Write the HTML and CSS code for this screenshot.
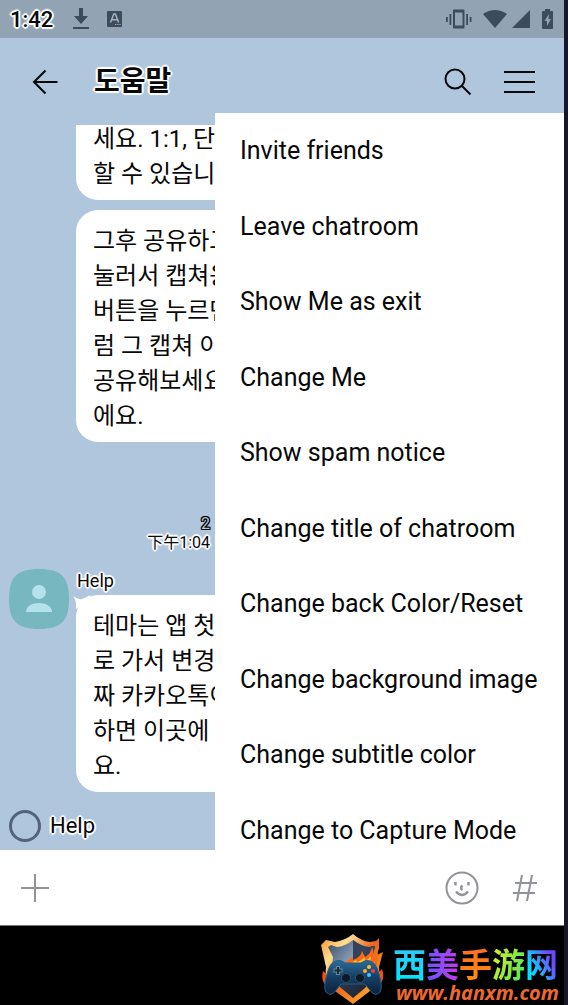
FILE: index.html
```html
<!DOCTYPE html>
<html lang="en">
<head>
<meta charset="utf-8">
<meta name="viewport" content="width=device-width, initial-scale=1">
<title>도움말</title>
<link rel="stylesheet" href="styles.css">
</head>
<body>
<div class="phone">
  <header class="status">
    <time class="clock outlined">1:42</time>
    <svg class="status-download" width="18" height="22" viewBox="0 0 18 22"><path d="M7 0h4v8h5l-7 8-7-8h5zM1 19h16v2H1z"/></svg>
    <svg width="16" height="18" viewBox="0 0 16 18"><rect y="1" width="15" height="16" rx="1"/><path d="M3.500 12.500 6.800 4h1.600l3.300 8.500M5 9.800h5" fill="none" stroke="#a5b3bf" stroke-width="1.500"/><path d="M8 14.500h6" stroke="#a5b3bf" stroke-dasharray="1.200 1"/></svg>
    <div class="status-right">
      <svg width="26" height="20" viewBox="0 0 26 20"><path fill-rule="evenodd" d="M7 1.500Q7 .5 8 .5h9.500q1 0 1 1v17q0 1-1 1H8q-1 0-1-1zm2 2v13h7.500v-13zM3.500 5h1.800v11H3.500zM0 8h1.800v5H0zM20.200 5H22v11h-1.800zM23.700 8h1.800v5h-1.800z"/></svg>
      <svg class="wifi" width="24" height="18" viewBox="0 0 24 18"><path d="M0 4Q12-4 24 4L12 18z"/></svg>
      <svg class="signal" width="18" height="18" viewBox="0 0 18 18"><path d="M18 0v18H0z"/></svg>
      <svg width="11" height="20" viewBox="0 0 11 20"><path fill-rule="evenodd" d="M3 0h5v2h2q1 0 1 1v16q0 1-1 1H1q-1 0-1-1V3q0-1 1-1h2zm4 5-4.500 7H5v5l4-7H6.500z"/></svg>
    </div>
  </header>

  <nav class="appbar">
    <button class="icon-btn" aria-label="Back"><svg width="26" height="26" viewBox="0 0 26 26"><path d="M13.500 1.500 2 13l11.500 11.500M2 13h23.500"/></svg></button>
    <h1 class="title outlined">도움말</h1>
    <button class="icon-btn search" aria-label="Search"><svg width="28" height="28" viewBox="0 0 28 28"><circle cx="11" cy="11" r="9.500"/><path d="m18 18 8.500 8.500"/></svg></button>
    <button class="icon-btn" aria-label="Menu"><svg width="32" height="26" viewBox="0 0 32 26"><path d="M0 3h31M0 13h31M0 23h31"/></svg></button>
  </nav>

  <main class="chat">
    <p class="bubble first">세요. 1:1, 단<br>할 수 있습니</p>
    <p class="bubble">그후 공유하고<br>눌러서 캡쳐용<br>버튼을 누르면<br>럼 그 캡쳐 이<br>공유해보세요<br>에요.</p>
    <div class="meta">
      <span class="unread">2</span>
      <time class="outlined">下午1:04</time>
    </div>
    <section class="message">
      <svg class="avatar" width="60" height="60" viewBox="0 0 60 60"><path fill="#77b7c0" d="M30 0C52 0 60 8 60 30S52 60 30 60 0 52 0 30 8 0 30 0z"/><circle cx="30" cy="23" r="7" fill="#b5e2ea"/><path d="M17 43c0-12 26-12 26 0z" fill="#b5e2ea"/></svg>
      <div class="message-body">
        <h2 class="sender outlined">Help</h2>
        <div class="tailed">
          <svg class="tail" width="18" height="14" viewBox="0 0 18 14"><path d="M0 1q5 4 9 3L18 0 10 10 3 14Q4 6 0 1z" fill="#fff"/></svg>
          <p class="bubble">테마는 앱 첫<br>로 가서 변경<br>짜 카카오톡이<br>하면 이곳에<br>요.</p>
        </div>
      </div>
    </section>
    <label class="speaker"><input type="radio" name="speaker"><span class="outlined">Help</span></label>
  </main>

  <ul class="menu">
    <li><button>Invite friends</button></li>
    <li><button>Leave chatroom</button></li>
    <li><button>Show Me as exit</button></li>
    <li><button>Change Me</button></li>
    <li><button>Show spam notice</button></li>
    <li><button>Change title of chatroom</button></li>
    <li><button>Change back Color/Reset</button></li>
    <li><button>Change background image</button></li>
    <li><button>Change subtitle color</button></li>
    <li><button>Change to Capture Mode</button></li>
  </ul>

  <form class="composer">
    <button type="button" class="icon-btn" aria-label="Add"><svg width="28" height="28" viewBox="0 0 28 28"><path d="M14 0v28M0 14h28"/></svg></button>
    <input class="entry" type="text" aria-label="Message">
    <button type="button" class="icon-btn" aria-label="Emoji"><svg width="34" height="34" viewBox="0 0 34 34"><circle cx="17" cy="17" r="15.500"/><path d="M10.500 11v3.500M23.500 11v3.500M17.500 14.500q-3 2.500 0 4.500M11 20.500q6 7 12 0" stroke-width="2.400"/></svg></button>
    <button type="button" class="icon-btn hash" aria-label="Hashtag"><svg width="24" height="28" viewBox="0 0 24 28"><path d="M9 1 4 27M19 1l-5 26M2 9h22M0 19h22"/></svg></button>
  </form>

  <footer class="brand">
    <svg class="crest" width="64" height="72" viewBox="0 0 64 72">
      <defs>
        <linearGradient id="rim" x2="1" y2="1"><stop stop-color="#ff8a2a"/><stop offset=".25" stop-color="#ffdf90"/><stop offset=".5" stop-color="#e8651b"/><stop offset=".8" stop-color="#ff9b28"/><stop offset="1" stop-color="#8d2b0b"/></linearGradient>
        <linearGradient id="steel" x2="1" y2="1"><stop stop-color="#3c4c60"/><stop offset=".45" stop-color="#8fa7c2"/><stop offset=".5" stop-color="#2a3648"/><stop offset="1" stop-color="#172030"/></linearGradient>
        <linearGradient id="pad" x2="0" y2="1"><stop stop-color="#2c6b98"/><stop offset=".5" stop-color="#153f64"/><stop offset="1" stop-color="#0b2039"/></linearGradient>
      </defs>
      <path d="M2 38q-3 12 6 16l4 5-3-15zM61 36q4 12-5 18l-5 5 4-17z" fill="#f0501a"/>
      <path d="M32 1q8 7 17 8l6-1 3-3v10l-2 7 6-3-4 15q2 15-9 24L32 71 14 58Q3 49 5 34L0 12l5-5 9 2q11-2 18-8z" fill="url(#rim)"/>
      <path d="M32 7q8 6 16 7l6-1q-1 6-3 11 3 21-7 31L32 65 19 54Q9 44 12 24L7 14l3-2 6 2q9-1 16-7z" fill="url(#steel)"/>
      <path d="M32 7q8 6 16 7l6-1q-1 6-3 11v7H32z" fill="#344158"/>
      <path d="M23 29q5-1 8-6l1 4q8-3 9-9l3 6q6-3 7-10 3 6 0 10l6-4q1 10-4 18z" fill="#f9691c"/>
      <path d="m30 30 5-3 1 2q6-2 7-5l2 4 5-5-1 8 5-2-4 7z" fill="#ffbc31"/>
      <path d="M15 28q5-2 9 2h16q5-4 9-2 6 1 9 13 4 13 1 18-5 6-11-3l-4-5H20l-4 5q-6 9-11 3-3-5 1-18 3-12 9-13z" fill="url(#pad)" stroke="#235e85"/>
      <path d="M17 33v9m-4.500-4.500h9" stroke="#6a8295" stroke-width="4"/><path d="M17 34v7m-3.500-3.500h7" stroke="#152b42" stroke-width="2"/>
      <g fill="#0c1929" stroke="#345068"><circle cx="25" cy="45" r="4.500"/><circle cx="39" cy="45" r="4.500"/></g>
      <circle cx="48" cy="34" r="2" fill="#ffbf35"/><circle cx="44" cy="38" r="2" fill="#ffad2a"/><circle cx="52" cy="38" r="2" fill="#ff3451"/><circle cx="48" cy="42" r="2" fill="#39c9ff"/>
    </svg>
    <div class="brand-text">
      <strong class="brand-name" lang="zh"><span class="cyan">西</span><span class="violet">美</span><span class="orange">手</span><span class="green">游</span><span class="blue">网</span></strong>
      <a class="brand-url" href="#">www.hanxm.com</a>
    </div>
  </footer>
</div>
</body>
</html>
```
FILE: styles.css
```css
* { box-sizing: border-box; }
body {
  margin: 0;
  background: #17172b;
  color: #080808;
  font-family: Roboto, "Noto Sans CJK KR", sans-serif;
}
h1, h2, p, ul { margin: 0; padding: 0; }
button {
  padding: 0;
  border: 0;
  background: none;
  color: inherit;
  font: inherit;
  text-align: left;
}
svg { display: block; flex: none; }
.phone {
  position: relative;
  display: flex;
  flex-direction: column;
  min-height: 100vh;
  margin-right: 4px;
  background: #b0c6dc;
}
.outlined {
  text-shadow: 1px 0 #fff, -1px 0 #fff, 0 1px #fff, 0 -1px #fff,
    1px 1px 1px #fff, -1px 1px 1px #fff, 1px -1px 1px #fff, -1px -1px 1px #fff,
    2px 0 1px #fff, -2px 0 1px #fff, 0 2px 1px #fff, 0 -2px 1px #fff;
}

.status {
  display: flex;
  align-items: center;
  height: 38px;
  padding: 0 11px 0 10px;
  background: #92a4b3;
  fill: #3d4c5a;
}
.clock {
  width: 62px;
  font-size: 22px;
  font-weight: 500;
}
.status-download { margin-right: 17px; }
.status-right {
  display: flex;
  align-items: center;
  margin-left: auto;
}
.wifi { margin-left: 11px; }
.signal { margin: 0 12px 0 5px; }

.appbar {
  display: flex;
  align-items: center;
  height: 87px;
  padding: 0 28px 0 32px;
}
.icon-btn svg {
  fill: none;
  stroke: currentColor;
  stroke-width: 2;
}
.title {
  flex: 1;
  margin-left: 36px;
  font-size: 28px;
  line-height: 40px;
  font-weight: 700;
}
.search { margin-right: 32px; }

.chat {
  flex: 1;
  display: flex;
  flex-direction: column;
  padding-left: 9px;
  overflow: hidden;
}
.bubble {
  margin-left: 67px;
  padding: 14px 17px 8px;
  border-radius: 22px 0 0 22px;
  background: #fff;
  font-size: 24px;
  line-height: 35px;
  white-space: nowrap;
}
.chat > .first {
  margin-top: -3px;
  margin-bottom: 10px;
  padding-top: 0;
  border-top-left-radius: 0;
}
.meta {
  display: flex;
  flex-direction: column;
  width: 201px;
  margin-top: 72px;
  font-size: 16px;
  line-height: 19px;
  text-align: right;
}
.unread {
  color: #b0c6dc;
  text-shadow: 1px 0 #000, -1px 0 #000, 0 1px #000, 0 -1px #000,
    1px 1px #000, -1px -1px #000, 1px -1px #000, -1px 1px #000;
}
.message {
  display: flex;
  margin-top: 17px;
}
.message-body { flex: 1; }
.sender {
  margin-left: 8px;
  font-size: 18px;
  line-height: 24px;
  font-weight: 400;
}
.tailed {
  position: relative;
  margin-top: 2px;
}
.tailed .bubble { margin-left: 7px; }
.tail {
  position: absolute;
  top: 0;
  left: 4px;
}
.speaker {
  display: flex;
  align-items: center;
  gap: 9px;
  padding-top: 18px;
  font-size: 22px;
  line-height: 32px;
}
.speaker input {
  appearance: none;
  width: 32px;
  height: 32px;
  margin: 0;
  border: 3px solid #52637a;
  border-radius: 50%;
}

.menu {
  position: absolute;
  top: 113px;
  right: 0;
  left: 215px;
  display: grid;
  grid-auto-rows: 1fr;
  height: 755px;
  background: #fff;
  list-style: none;
  font-size: 25px;
}
.menu button {
  width: 100%;
  height: 100%;
  padding-left: 25px;
  white-space: nowrap;
}

.composer {
  position: relative;
  display: flex;
  align-items: center;
  height: 75px;
  padding: 0 27px 0 21px;
  background: #fff;
  color: #919397;
}
.entry {
  flex: 1;
  min-width: 0;
  height: 40px;
  border: 0;
  background: none;
  font: inherit;
}
.hash { margin-left: 34px; }

.brand {
  display: flex;
  justify-content: flex-end;
  gap: 8px;
  height: 80px;
  padding-right: 6px;
  border-top: 1px solid #777;
  background: #000;
}
.crest { margin-top: 7px; }
.brand-text {
  display: flex;
  flex-direction: column;
  width: 165px;
  padding-top: 19px;
}
.brand-name {
  display: flex;
  font: 700 33px/36px "Noto Sans CJK SC", sans-serif;
}
.brand-name span {
  background-clip: text;
  color: transparent;
}
.cyan { background-image: linear-gradient(#35c5f5, #00e5ff); }
.violet { background-image: linear-gradient(90deg, #6757ff, #c53bea); }
.orange { background-image: linear-gradient(#ff6b24, #ff8b14); }
.green { background-image: linear-gradient(110deg, #e9ee24, #45e65d); }
.blue { background-image: linear-gradient(65deg, #00e1ff 20%, #7047ff 75%); }
.brand-url {
  padding-left: 3px;
  color: #ed6930;
  font: italic 700 20px/24px "Open Sans", sans-serif;
  text-decoration: none;
}
```
